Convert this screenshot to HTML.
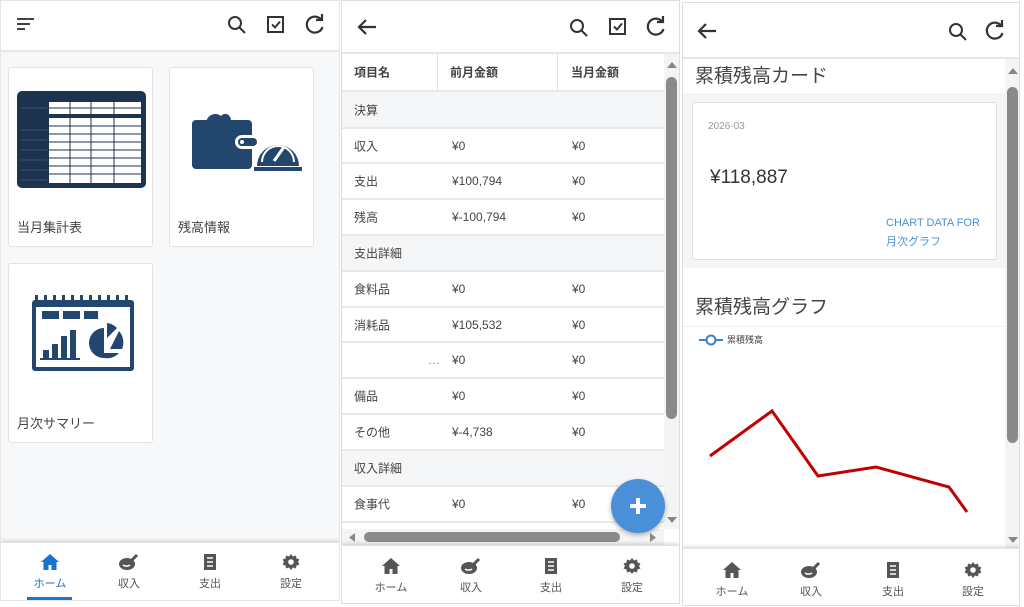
<!DOCTYPE html>
<html><head><meta charset="utf-8"><style>
*{box-sizing:border-box;margin:0;padding:0}
body{width:1024px;height:607px;position:relative;background:#fff;font-family:"Liberation Sans","Noto Sans CJK JP",sans-serif;color:#333;overflow:hidden}
.abs{position:absolute}
.panel{position:absolute;overflow:hidden;border:1px solid #ddd}
.hdr{position:absolute;left:0;right:0;top:0;background:#fff;border-bottom:2px solid #e6e6e6}
.nav{position:absolute;left:0;right:0;background:#fff;box-shadow:0 -2px 3px rgba(0,0,0,.12);border-top:1px solid #e2e2e2}
.nav .it{position:absolute;width:60px;text-align:center;font-size:11px;color:#555}
.nav .it svg{display:block;margin:0 auto 4px}
.card{position:absolute;background:#fff;border:1px solid #e1e3e6;border-radius:3px}
.card .lb{position:absolute;left:8px;bottom:10px;font-size:13px;color:#444}
.row{position:absolute;left:0;width:322px;border-bottom:2px solid #e8e9eb;font-size:12px;color:#444;background:#fff}
.row.sec{background:#f5f6f8}
.row span{position:absolute;top:50%;transform:translateY(-50%)}
</style></head><body>

<!-- PANEL 1 -->
<div class="panel" style="left:0;top:0;width:340px;height:601px;background:#f7f8fa;border-color:#e5e5e5">
 <div class="hdr" style="height:51px">
  <svg class="abs" style="left:15px;top:16px" width="20" height="16"><rect x="1" y="1" width="17" height="2" fill="#444"/><rect x="1" y="6" width="13" height="2" fill="#444"/><rect x="1" y="11" width="8" height="2" fill="#444"/></svg>
  <svg class="abs" style="left:225px;top:13px" width="22" height="22" fill="none" stroke="#333" stroke-width="2"><circle cx="9" cy="9" r="6"/><path d="M13.5 13.5L19 19"/></svg>
  <svg class="abs" style="left:264px;top:13px" width="22" height="22" fill="none" stroke="#333" stroke-width="2"><rect x="3" y="3" width="15" height="15"/><path d="M7 10.5l3 3 5-6"/></svg>
  <svg class="abs" style="left:302px;top:12px" width="24" height="24" fill="none" stroke="#333" stroke-width="2.2"><path d="M18 6.5A8 8 0 1 0 19.5 14"/><path d="M13 7h6V1" /></svg>
 </div>
 <div class="card" style="left:7px;top:66px;width:145px;height:180px">
  <svg class="abs" style="left:7px;top:22px" width="131" height="100"><rect x="1" y="1" width="129" height="97" rx="5" fill="#1e3350"/><rect x="33" y="12" width="92" height="12" fill="#fff"/><rect x="33" y="28" width="92" height="65" fill="#fff"/><g stroke="#1e3350" stroke-width="1"><path d="M54 8V95M75 8V95M98 8V95"/><path d="M33 18H125M33 36H125M33 44H125M33 52H125M33 60H125M33 68H125M33 76H125M33 84H125"/><path d="M5 18H31M5 40H31M5 50H31M5 60H31M5 70H31M5 80H31M5 90H31" stroke="#3b5274"/></g></svg>
  <div class="lb">当月集計表</div>
 </div>
 <div class="card" style="left:168px;top:66px;width:145px;height:180px">
  <svg class="abs" style="left:20px;top:40px" width="115" height="65" fill="#22466e"><path d="M16 14c2-8 10-10 15-6 4-4 9-2 10 4l4 2H16z"/><rect x="2" y="12" width="60" height="49" rx="4"/><rect x="45" y="27" width="25" height="14" rx="7" fill="#fff"/><rect x="48" y="30" width="19" height="8" rx="4"/><circle cx="52" cy="34" r="2" fill="#fff"/><path d="M67 58a21 21 0 0 1 42 0z"/><path d="M72 54a16 16 0 0 1 32 0" fill="none" stroke="#fff" stroke-width="2"/><path d="M84 53l10-14" stroke="#fff" stroke-width="3"/><rect x="64" y="59" width="48" height="4"/></svg>
  <div class="lb">残高情報</div>
 </div>
 <div class="card" style="left:7px;top:262px;width:145px;height:180px">
  <svg class="abs" style="left:22px;top:30px" width="104" height="80" fill="#22466e"><path d="M4 6h96a3 3 0 0 1 3 3v65a3 3 0 0 1-3 3H4a3 3 0 0 1-3-3V9a3 3 0 0 1 3-3z"/><rect x="5" y="13" width="94" height="60" fill="#fff"/><g fill="#22466e"><rect x="4" y="1" width="3" height="8"/><rect x="13" y="1" width="3" height="8"/><rect x="22" y="1" width="3" height="8"/><rect x="31" y="1" width="3" height="8"/><rect x="40" y="1" width="3" height="8"/><rect x="49" y="1" width="3" height="8"/><rect x="58" y="1" width="3" height="8"/><rect x="67" y="1" width="3" height="8"/><rect x="76" y="1" width="3" height="8"/><rect x="85" y="1" width="3" height="8"/><rect x="94" y="1" width="3" height="8"/><rect x="11" y="17" width="17" height="8"/><rect x="32" y="17" width="17" height="8"/><rect x="53" y="17" width="14" height="8"/><rect x="12" y="56" width="6" height="8"/><rect x="21" y="50" width="6" height="14"/><rect x="30" y="42" width="6" height="22"/><rect x="39" y="36" width="6" height="28"/><rect x="9" y="64" width="40" height="2"/><path d="M73 44v15h15a16 16 0 0 1-15 5 15 15 0 0 1 0-30z"/><path d="M76 29a17 17 0 0 1 10 5l-10 10z"/><path d="M88 37a17 17 0 0 1 3 18H79z"/></g></svg>
  <div class="lb">月次サマリー</div>
 </div>
 <div class="nav" style="top:541px;height:60px">
  <div class="it" style="left:19px;top:10px;color:#1a73d0"><svg width="20" height="18" viewBox="0 0 20 18"><path d="M10 1L1 9h2.5v8h5v-5h3v5h5V9H19z" fill="#1a73d0"/></svg>ホーム</div>
  <div style="position:absolute;left:26px;top:54px;width:45px;height:3px;background:#1a73d0"></div>
  <div class="it" style="left:98px;top:10px"><svg width="22" height="18" viewBox="0 0 22 18"><ellipse cx="9" cy="11" rx="8" ry="6" fill="#555"/><path d="M14 7l5-5" stroke="#555" stroke-width="3"/><path d="M5 12a5 4 0 0 0 7 0" stroke="#fff" stroke-width="1.5" fill="none"/></svg>収入</div>
  <div class="it" style="left:179px;top:10px"><svg width="16" height="18" viewBox="0 0 16 18"><rect x="2" y="1" width="12" height="16" fill="#555"/><path d="M5 5h6M5 9h6M5 13h6" stroke="#fff" stroke-width="1.5"/></svg>支出</div>
  <div class="it" style="left:260px;top:10px"><svg width="18" height="18" viewBox="0 0 18 18"><path d="M9 1l2 2.5 3-1 .5 3 3 1-1.5 2.5 1.5 2.5-3 1-.5 3-3-1L9 17l-2-2.5-3 1-.5-3-3-1L2 9 .5 6.5l3-1 .5-3 3 1z" fill="#555"/><circle cx="9" cy="9" r="2.8" fill="#fff"/></svg>設定</div>
 </div>
</div>

<!-- PANEL 2 -->
<div class="panel" style="left:341px;top:0;width:339px;height:604px;background:#fff">
 <div class="hdr" style="height:53px">
  <svg class="abs" style="left:14px;top:16px" width="22" height="20" fill="none" stroke="#333" stroke-width="2.2"><path d="M20 10H3M10 3L3 10l7 7"/></svg>
  <svg class="abs" style="left:226px;top:16px" width="22" height="22" fill="none" stroke="#333" stroke-width="2"><circle cx="9" cy="9" r="6"/><path d="M13.5 13.5L19 19"/></svg>
  <svg class="abs" style="left:265px;top:15px" width="22" height="22" fill="none" stroke="#333" stroke-width="2"><rect x="3" y="3" width="15" height="15"/><path d="M7 10.5l3 3 5-6"/></svg>
  <svg class="abs" style="left:302px;top:14px" width="24" height="24" fill="none" stroke="#333" stroke-width="2.2"><path d="M18 6.5A8 8 0 1 0 19.5 14"/><path d="M13 7h6V1"/></svg>
 </div>
 <div class="row" style="top:53px;height:38px;font-weight:bold"><span style="left:12px">項目名</span><span style="left:108px">前月金額</span><span style="left:229px">当月金額</span><div class="abs" style="left:95px;top:0;width:1px;height:36px;background:#e5e5e5"></div><div class="abs" style="left:215px;top:0;width:1px;height:36px;background:#e5e5e5"></div></div>
 <div class="row sec" style="top:91px;height:37px"><span style="left:12px">決算</span></div>
 <div class="row" style="top:128px;height:35px"><span style="left:12px">収入</span><span style="left:110px">¥0</span><span style="left:230px">¥0</span></div>
 <div class="row" style="top:163px;height:36px"><span style="left:12px">支出</span><span style="left:110px">¥100,794</span><span style="left:230px">¥0</span></div>
 <div class="row" style="top:199px;height:36px"><span style="left:12px">残高</span><span style="left:110px">¥-100,794</span><span style="left:230px">¥0</span></div>
 <div class="row sec" style="top:235px;height:36px"><span style="left:12px">支出詳細</span></div>
 <div class="row" style="top:271px;height:36px"><span style="left:12px">食料品</span><span style="left:110px">¥0</span><span style="left:230px">¥0</span></div>
 <div class="row" style="top:307px;height:35px"><span style="left:12px">消耗品</span><span style="left:110px">¥105,532</span><span style="left:230px">¥0</span></div>
 <div class="row" style="top:342px;height:36px"><span style="left:86px;color:#888">…</span><span style="left:110px">¥0</span><span style="left:230px">¥0</span></div>
 <div class="row" style="top:378px;height:36px"><span style="left:12px">備品</span><span style="left:110px">¥0</span><span style="left:230px">¥0</span></div>
 <div class="row" style="top:414px;height:36px"><span style="left:12px">その他</span><span style="left:110px">¥-4,738</span><span style="left:230px">¥0</span></div>
 <div class="row sec" style="top:450px;height:36px"><span style="left:12px">収入詳細</span></div>
 <div class="row" style="top:486px;height:36px"><span style="left:12px">食事代</span><span style="left:110px">¥0</span><span style="left:230px">¥0</span></div>
 <div class="abs" style="left:322px;top:53px;width:16px;height:475px;background:#f4f4f4"></div>
 <div class="abs" style="left:324px;top:76px;width:11px;height:342px;border-radius:6px;background:#8a8a8a"></div>
 <svg class="abs" style="left:324px;top:60px" width="12" height="8"><path d="M1 7L6 1l5 6z" fill="#888"/></svg>
 <svg class="abs" style="left:324px;top:515px" width="12" height="8"><path d="M1 1l5 6 5-6z" fill="#888"/></svg>
 <div class="abs" style="left:0;top:528px;width:322px;height:16px;background:#f4f4f4"></div>
 <div class="abs" style="left:22px;top:531px;width:256px;height:10px;border-radius:5px;background:#8a8a8a"></div>
 <svg class="abs" style="left:6px;top:531px" width="8" height="11"><path d="M7 1L1 5.5 7 10z" fill="#888"/></svg>
 <svg class="abs" style="left:307px;top:531px" width="8" height="11"><path d="M1 1l6 4.5L1 10z" fill="#888"/></svg>
 <div class="abs" style="left:269px;top:478px;width:54px;height:54px;border-radius:50%;background:#4a90d9;box-shadow:0 2px 5px rgba(0,0,0,.3)"><svg class="abs" style="left:17px;top:17px" width="20" height="20"><path d="M10 2v16M2 10h16" stroke="#fff" stroke-width="4"/></svg></div>
 <div class="nav" style="top:544px;height:60px">
  <div class="it" style="left:19px;top:11px"><svg width="20" height="18" viewBox="0 0 20 18"><path d="M10 1L1 9h2.5v8h5v-5h3v5h5V9H19z" fill="#555"/></svg>ホーム</div>
  <div class="it" style="left:99px;top:11px"><svg width="22" height="18" viewBox="0 0 22 18"><ellipse cx="9" cy="11" rx="8" ry="6" fill="#555"/><path d="M14 7l5-5" stroke="#555" stroke-width="3"/><path d="M5 12a5 4 0 0 0 7 0" stroke="#fff" stroke-width="1.5" fill="none"/></svg>収入</div>
  <div class="it" style="left:179px;top:11px"><svg width="16" height="18" viewBox="0 0 16 18"><rect x="2" y="1" width="12" height="16" fill="#555"/><path d="M5 5h6M5 9h6M5 13h6" stroke="#fff" stroke-width="1.5"/></svg>支出</div>
  <div class="it" style="left:260px;top:11px"><svg width="18" height="18" viewBox="0 0 18 18"><path d="M9 1l2 2.5 3-1 .5 3 3 1-1.5 2.5 1.5 2.5-3 1-.5 3-3-1L9 17l-2-2.5-3 1-.5-3-3-1L2 9 .5 6.5l3-1 .5-3 3 1z" fill="#555"/><circle cx="9" cy="9" r="2.8" fill="#fff"/></svg>設定</div>
 </div>
</div>

<!-- PANEL 3 -->
<div class="panel" style="left:682px;top:2px;width:338px;height:604px;background:#fff">
 <div class="hdr" style="height:56px">
  <svg class="abs" style="left:13px;top:18px" width="22" height="20" fill="none" stroke="#333" stroke-width="2.2"><path d="M20 10H3M10 3L3 10l7 7"/></svg>
  <svg class="abs" style="left:264px;top:18px" width="22" height="22" fill="none" stroke="#333" stroke-width="2"><circle cx="9" cy="9" r="6"/><path d="M13.5 13.5L19 19"/></svg>
  <svg class="abs" style="left:300px;top:16px" width="24" height="24" fill="none" stroke="#333" stroke-width="2.2"><path d="M18 6.5A8 8 0 1 0 19.5 14"/><path d="M13 7h6V1"/></svg>
 </div>
 <div class="abs" style="left:12px;top:58px;font-size:19px;color:#444">累積残高カード</div>
 <div class="abs" style="left:0;top:90px;width:322px;height:175px;background:#f5f6f8"></div>
 <div class="abs" style="left:9px;top:99px;width:305px;height:158px;background:#fff;border:1px solid #dedede;border-radius:3px">
  <div class="abs" style="left:15px;top:18px;font-size:10px;color:#999">2026-03</div>
  <div class="abs" style="left:17px;top:64px;font-size:19px;color:#333">¥118,887</div>
  <div class="abs" style="left:193px;top:111px;font-size:11px;line-height:19px;color:#4a90d9">CHART DATA FOR<br>月次グラフ</div>
 </div>
 <div class="abs" style="left:12px;top:289px;font-size:19px;color:#444">累積残高グラフ</div>
 <div class="abs" style="left:0;top:323px;width:322px;height:1px;background:#eee"></div>
 <svg class="abs" style="left:16px;top:331px" width="24" height="12"><path d="M0 6h24" stroke="#3b82c4" stroke-width="2"/><circle cx="12" cy="6" r="4.5" fill="#fff" stroke="#3b82c4" stroke-width="2"/></svg>
 <div class="abs" style="left:44px;top:330px;font-size:9px;color:#444">累積残高</div>
 <svg class="abs" style="left:0;top:0" width="322" height="545"><polyline points="27,453 89,408 135,473 193,464 266,484 284,509" fill="none" stroke="#c00000" stroke-width="3"/></svg>
 <div class="abs" style="left:322px;top:56px;width:16px;height:489px;background:#f4f4f4"></div>
 <div class="abs" style="left:324px;top:84px;width:11px;height:356px;border-radius:6px;background:#8a8a8a"></div>
 <svg class="abs" style="left:324px;top:64px" width="12" height="8"><path d="M1 7L6 1l5 6z" fill="#888"/></svg>
 <svg class="abs" style="left:324px;top:533px" width="12" height="8"><path d="M1 1l6 4.5L1 10z" fill="none"/><path d="M1 1l5 6 5-6z" fill="#888"/></svg>
 <div class="nav" style="top:545px;height:60px">
  <div class="it" style="left:19px;top:12px"><svg width="20" height="18" viewBox="0 0 20 18"><path d="M10 1L1 9h2.5v8h5v-5h3v5h5V9H19z" fill="#555"/></svg>ホーム</div>
  <div class="it" style="left:98px;top:12px"><svg width="22" height="18" viewBox="0 0 22 18"><ellipse cx="9" cy="11" rx="8" ry="6" fill="#555"/><path d="M14 7l5-5" stroke="#555" stroke-width="3"/><path d="M5 12a5 4 0 0 0 7 0" stroke="#fff" stroke-width="1.5" fill="none"/></svg>収入</div>
  <div class="it" style="left:180px;top:12px"><svg width="16" height="18" viewBox="0 0 16 18"><rect x="2" y="1" width="12" height="16" fill="#555"/><path d="M5 5h6M5 9h6M5 13h6" stroke="#fff" stroke-width="1.5"/></svg>支出</div>
  <div class="it" style="left:260px;top:12px"><svg width="18" height="18" viewBox="0 0 18 18"><path d="M9 1l2 2.5 3-1 .5 3 3 1-1.5 2.5 1.5 2.5-3 1-.5 3-3-1L9 17l-2-2.5-3 1-.5-3-3-1L2 9 .5 6.5l3-1 .5-3 3 1z" fill="#555"/><circle cx="9" cy="9" r="2.8" fill="#fff"/></svg>設定</div>
 </div>
</div>
</body></html>
